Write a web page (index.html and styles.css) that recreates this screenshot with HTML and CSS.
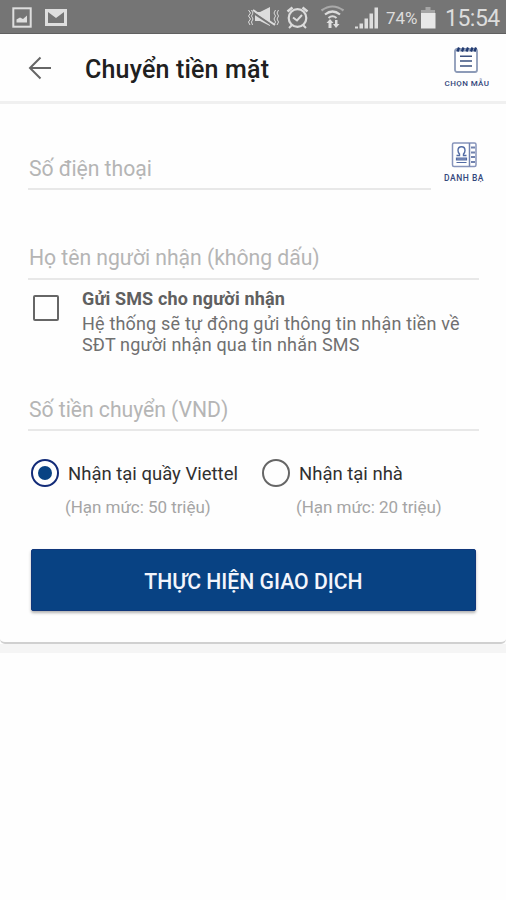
FILE: index.html
```html
<!DOCTYPE html>
<html lang="vi">
<head>
<meta charset="utf-8">
<title>Chuyển tiền mặt</title>
<link rel="stylesheet" href="styles.css">
</head>
<body>
<div class="status">
  <svg class="status-left" width="80" height="33" viewBox="0 0 80 33">
    <rect x="13.3" y="8.3" width="17.4" height="18.4" fill="none" stroke="#dedede" stroke-width="2"/>
    <path d="M16.500 22.500v-3l3.500-2 3 1.500 4-3.500v7z" fill="#dedede"/>
    <path d="M45 9h22v17H45z" fill="#dedede"/>
    <path d="M48 12l8 6 8-6v11H48z" fill="#757575"/>
  </svg>
  <svg class="status-icons" width="138" height="33" viewBox="242 0 138 33">
    <g fill="none" stroke="#dcdcdc">
      <path d="M248.500 10l2 3-2 3 2 3-2 3 1.500 3M251.500 10l1.500 3-1.500 3 1.500 3-1.500 3 1 3M275.500 10l-1.500 3 1.500 3-1.500 3 1.500 3-1.500 3M278.500 10l-1.500 3 1.500 3-1.500 3 1.500 3-1.500 3" stroke-width="1"/>
      <path d="M255 12h5l10-5v19l-10-5h-5z" fill="#dcdcdc" stroke="none"/>
      <path d="M254 13l21 14" stroke="#757575" stroke-width="2.500"/>
      <path d="M253 10l22 15" stroke-width="2"/>
      <circle cx="297.500" cy="18" r="8.800" stroke-width="2.200"/>
      <path d="M293 17.500l4 3 5-5.500M292 25l-3 3M303 25l3 3" stroke-width="2"/>
      <path d="M287.500 11.500l5-4M307.500 11.500l-5-4" stroke-width="2.500"/>
      <path d="M321.500 10.500q11-8 22 0" stroke="#a9a9a9" stroke-width="2.200"/>
      <path d="M325 14.500q7.500-6 15 0" stroke-width="2.200"/>
      <path d="M328.500 18q4-3.500 8 0" stroke-width="2"/>
    </g>
    <path d="M330 19l3.500 4h-2v5h-3v-5h-2zM336 28l-3-4h2v-4h2.500v4h2z" fill="#dedede"/>
    <path d="M355 28.500v-2h3v2zM359.500 28.500v-5h3.500v5zM364.500 28.500v-10h3.500v10zM369.500 28.500v-15h3.500v15zM374.500 28.500v-21h3.500v21z" fill="#dedede"/>
  </svg>
  <span class="percent">74%</span>
  <svg class="battery" width="16" height="33" viewBox="420 0 16 33">
    <path d="M425.500 7h5v3h4.500v4h-14v-4h4.500z" fill="#a5a5a5"/>
    <path d="M421 13h14.500v15.500H421z" fill="#e8e8e8"/>
  </svg>
  <span class="clock">15:54</span>
</div>
<header class="header">
  <svg class="back" width="24" height="24" viewBox="0 0 24 24"><path d="M23 12H2M12.500 1.500L2 12l10.500 10.500" fill="none" stroke="#666" stroke-width="2"/></svg>
  <h1 class="title"><span>Chuyển tiền mặt</span></h1>
  <div class="action template">
    <svg width="26" height="30" viewBox="0 0 26 30">
      <rect x="1" y="4" width="22" height="23" rx="2" fill="#fff" stroke="#8d9bb8" stroke-width="1.800"/>
      <path d="M2 5h20" stroke="#8d9bb8" stroke-width="3"/>
      <path d="M3.500 6.500l1.500-4M8 6.500l1.500-4M12.500 6.500l1.500-4M17 6.500l1.500-4M20.500 6.500l1.500-4" stroke="#213a70" stroke-width="2.200"/>
      <path d="M6 11.300h12M6 16h12M6 21h12" stroke="#3b5180" stroke-width="1.600"/>
    </svg>
    <span>CHỌN MẪU</span>
  </div>
</header>
<main class="form">
  <div class="phone-row">
    <div class="field phone"><span>Số điện thoại</span></div>
    <div class="action contacts">
      <svg width="26" height="26" viewBox="0 0 26 26">
        <rect x="1.500" y="1" width="23.500" height="23.500" rx="1.500" fill="#fff" stroke="#8794bb" stroke-width="1.500"/>
        <path d="M18.500 1v23.500" stroke="#7182ae" stroke-width="1.500"/>
        <path d="M20 5.500h4M20 10.500h4M20 15h4M20 20h4" stroke="#7182ae" stroke-width="1.800"/>
        <path d="M5.500 13.500h3v-1.500q-1.500-1.500-1.500-3.500c0-5 7-5 7 0q0 2-1.500 3.500v1.500h3" fill="none" stroke="#526ba4" stroke-width="1.400"/>
        <path d="M5.500 16h10v2h-10zM5.500 20.500h10" fill="#8d9abf" stroke="#526ba4" stroke-width="1.200"/>
      </svg>
      <span>DANH BẠ</span>
    </div>
  </div>
  <div class="field name"><span>Họ tên người nhận (không dấu)</span></div>
  <div class="sms">
    <span class="checkbox"></span>
    <div class="sms-text">
      <div class="sms-title"><span>Gửi SMS cho người nhận</span></div>
      <div class="sms-line"><span>Hệ thống sẽ tự động gửi thông tin nhận tiền về</span></div>
      <div class="sms-line"><span>SĐT người nhận qua tin nhắn SMS</span></div>
    </div>
  </div>
  <div class="field amount"><span>Số tiền chuyển (VND)</span></div>
  <div class="options">
    <div class="option">
      <span class="radio checked"></span>
      <div><div class="label"><span>Nhận tại quầy Viettel</span></div><div class="limit"><span>(Hạn mức: 50 triệu)</span></div></div>
    </div>
    <div class="option">
      <span class="radio"></span>
      <div><div class="label"><span>Nhận tại nhà</span></div><div class="limit"><span>(Hạn mức: 20 triệu)</span></div></div>
    </div>
  </div>
  <div class="submit"><span>THỰC HIỆN GIAO DỊCH</span></div>
</main>
<div class="gap"></div>
<div class="next-card"></div>
</body>
</html>
```
FILE: styles.css
```css
* { box-sizing: border-box; }
body { margin: 0; width: 506px; height: 900px; overflow: hidden; background: #fefefe; font-family: Roboto, "Noto Sans", sans-serif; white-space: nowrap; }
svg { display: block; flex: none; }
.status { height: 34px; display: flex; background: #757575; border-bottom: 1px solid #606060; color: #dcdcdc; }
.status-icons { margin-left: 162px; }
.percent { width: 34px; margin-left: 6px; font-size: 17px; line-height: 36px; }
.clock { margin-left: 9px; font-size: 23px; line-height: 37px; letter-spacing: -0.5px; }
.header { height: 70px; display: flex; background: #fefefe; border-bottom: 3px solid #f0f0f0; }
.back { margin: 22px 0 0 28px; }
.title { flex: 1; margin: 0 0 0 33px; font-size: 25px; font-weight: 500; line-height: 71px; letter-spacing: 0.18px; color: #202020; }
.action { display: flex; flex-direction: column; align-items: center; color: #34477c; font-size: 8px; font-weight: 500; }
.template { width: 50px; margin-right: 14px; padding-top: 11px; }
.template span { line-height: 12px; margin-top: 3px; letter-spacing: 0.4px; }
.contacts { width: 48px; margin-left: 9px; padding-top: 38px; }
.contacts span { line-height: 12px; margin-top: 4px; font-size: 8.5px; letter-spacing: 0.5px; }
.form { height: 540px; display: flex; flex-direction: column; padding: 0 27px 0 28px; border-bottom: 2px solid #d0d0d0; border-radius: 0 0 5px 5px; }
.phone-row { display: flex; height: 86px; margin-right: -9px; }
.field { padding-left: 1px; font-size: 21.2px; letter-spacing: -0.04px; color: #b5b5b5; border-bottom: 2px solid #e8e8e8; }
.phone { width: 403px; padding-top: 46px; line-height: 38px; }
.name { height: 90px; padding-top: 50px; line-height: 36px; }
.sms { height: 104px; display: flex; }
.checkbox { width: 26px; height: 26px; margin: 15px 0 0 5px; border: 2px solid #666; border-radius: 2px; }
.sms-text { margin-left: 23px; padding-top: 8px; }
.sms-title { height: 25px; font-size: 18px; font-weight: 700; line-height: 22px; letter-spacing: 0.14px; color: #606060; }
.sms-line { height: 21px; font-size: 18px; line-height: 21px; letter-spacing: 0.18px; color: #707070; }
.amount { height: 47px; padding-top: 7px; line-height: 38px; }
.options { display: flex; height: 118px; padding: 28px 0 0 3px; }
.option { display: flex; flex: none; width: 231px; }
.radio { width: 28px; height: 28px; border: 2.5px solid #666; border-radius: 50%; display: flex; align-items: center; justify-content: center; }
.checked { border-color: #122b78; }
.checked::before { content: ""; width: 14px; height: 14px; border-radius: 50%; background: #084283; }
.label { margin-left: 9px; font-size: 18.5px; line-height: 31px; color: #303030; }
.limit { margin: 4px 0 0 6px; font-size: 17px; line-height: 26px; letter-spacing: -0.05px; color: #a5a5a5; }
.submit { width: 445px; height: 62px; margin-left: 3px; border-radius: 2px; background: #084283; border: 1px solid #10377b; box-shadow: 0 2px 3px rgba(0,0,0,.3); color: #f3f5fc; text-align: center; font-size: 21.2px; font-weight: 500; line-height: 64px; }
.gap { height: 9px; background: #f5f5f5; }
.next-card { height: 247px; background: #fefefe; }
```
